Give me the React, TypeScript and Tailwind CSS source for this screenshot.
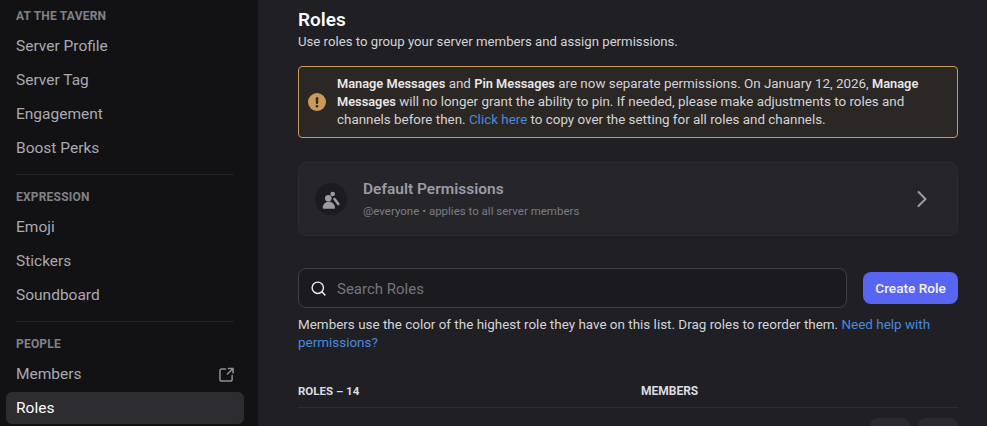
import React from 'react';
import { ChevronRight, Search } from 'lucide-react';

const NavHeader: React.FC<{ label: string }> = ({ label }) => (
  <div className="flex h-[26px] shrink-0 items-center pl-[10px] pt-[1px] text-[12px] font-bold tracking-[0.2px] text-[#818189]">{label}</div>
);

const NavItem: React.FC<{ label: string; active?: boolean; external?: boolean }> = ({ label, active, external }) => (
  <div className={`flex h-8 shrink-0 items-center justify-between rounded-md px-[10px] text-[15.5px] ${active ? 'bg-[#2c2c31] text-[#fbfbfb]' : 'text-[#a9a9b0]'}`}>
    <span className="pt-[1px]">{label}</span>
    {external && (
      <svg width="15" height="15" viewBox="0 0 16 16" fill="none" stroke="#8e8e95" strokeWidth="1.600" strokeLinecap="round" strokeLinejoin="round">
        <path d="M7 2H3a2 2 0 0 0-2 2v9a2 2 0 0 0 2 2h9a2 2 0 0 0 2-2V9" />
        <path d="M10 1.500h5V6.500M15 1.500 9 7.500" />
      </svg>
    )}
  </div>
);

const Divider = () => <div className="mx-[10px] mt-[8px] mb-[6px] h-px shrink-0 bg-[#222226]" />;

const Strong: React.FC<{ children: React.ReactNode }> = ({ children }) => (
  <b className="text-[12.8px] font-semibold text-[#e8e8ea]">{children}</b>
);

export default function App() {
  return (
    <div className="flex h-[426px] w-[987px] overflow-hidden bg-[#1f1f24] font-['Roboto',sans-serif]">
      {/* Sidebar */}
      <aside className="flex w-[258px] shrink-0 flex-col gap-[2px] bg-[#121214] pl-[6px] pr-[14px] pt-[2px]">
        <NavHeader label="AT THE TAVERN" />
        <NavItem label="Server Profile" />
        <NavItem label="Server Tag" />
        <NavItem label="Engagement" />
        <NavItem label="Boost Perks" />
        <Divider />
        <NavHeader label="EXPRESSION" />
        <NavItem label="Emoji" />
        <NavItem label="Stickers" />
        <NavItem label="Soundboard" />
        <Divider />
        <NavHeader label="PEOPLE" />
        <NavItem label="Members" external />
        <NavItem label="Roles" active />
      </aside>

      {/* Main */}
      <main className="ml-10 flex w-[660px] shrink-0 flex-col">
        <h1 className="mt-[8px] shrink-0 text-[19px] leading-[24px] font-semibold text-[#fbfbfb]">Roles</h1>
        <p className="mt-[1px] shrink-0 text-[13.2px] leading-[18px] text-[#d4d4d8]">Use roles to group your server members and assign permissions.</p>

        <div className="mt-[15px] flex h-[72px] shrink-0 items-center gap-[11px] rounded-[4px] border border-[#c99a55] bg-[#2b2724] pl-[9px] pr-[24px]">
          <svg width="18" height="18" viewBox="0 0 18 18" className="shrink-0">
            <circle cx="9" cy="9" r="9" fill="#cb9a58" />
            <rect x="7.800" y="4" width="2.400" height="7" rx="1.200" fill="#2b2724" />
            <circle cx="9" cy="13.200" r="1.300" fill="#2b2724" />
          </svg>
          <p className="text-[13.4px] leading-[18px] text-[#d4d4d8]">
            <Strong>Manage Messages</Strong> and <Strong>Pin Messages</Strong> are now separate permissions. On January 12, 2026, <Strong>Manage Messages</Strong> will no longer grant the ability to pin. If needed, please make adjustments to roles and channels before then. <span className="text-[#4a8ade]">Click here</span> to copy over the setting for all roles and channels.
          </p>
        </div>

        <div className="mt-[24px] flex h-[74px] shrink-0 items-center rounded-lg border border-[#2c2c31] bg-[#25252a] pl-[16px] pr-[21px]">
          <div className="flex h-8 w-8 items-center justify-center rounded-full bg-[#1c1c20]">
            <svg width="20" height="20" viewBox="0 0 20 20" fill="#9b9ba3">
              <circle cx="7.300" cy="9.300" r="3.300" />
              <path d="M1.700 19c0-3.800 2.500-6.300 6.100-6.300 3.500 0 6.200 2.500 6.200 6.300 0 .5-.3.800-.8.800H2.500c-.5 0-.8-.3-.8-.8Z" />
              <circle cx="11.700" cy="5" r="2.300" />
              <path d="M13.500 10 17.300 15" fill="none" stroke="#9b9ba3" strokeWidth="2.600" strokeLinecap="round" />
            </svg>
          </div>
          <div className="ml-[16px] flex-1">
            <div className="text-[15.5px] leading-[20px] font-semibold text-[#9b9ba3]">Default Permissions</div>
            <div className="mt-[4px] text-[11.5px] leading-[16px] text-[#7c7c84]">@everyone • applies to all server members</div>
          </div>
          <ChevronRight size={28} strokeWidth={1.8} className="text-[#9b9ba3]" />
        </div>

        <div className="mt-[32px] flex shrink-0 items-center gap-4">
          <div className="flex h-[40px] flex-1 items-center gap-[10px] rounded-lg border border-[#404046] bg-[#1b1b1f] pl-[11px]">
            <Search size={17} className="text-[#f0f0f2]" />
            <span className="pt-[2px] text-[15px] text-[#74747c]">Search Roles</span>
          </div>
          <button className="h-8 w-[95px] rounded-lg bg-[#5865f2] text-[13.6px] font-medium text-[#f4f5ff]">Create Role</button>
        </div>

        <p className="mt-[8px] shrink-0 text-[13.45px] leading-[18px] text-[#d4d4d8]">
          Members use the color of the highest role they have on this list. Drag roles to reorder them. <span className="text-[#4a8ade]">Need help with permissions?</span>
        </p>

        <div className="mt-[31px] flex h-[25px] shrink-0 items-start border-b border-[#2c2c31] text-[12px] leading-[16px] font-bold text-[#dcdce0]">
          <span className="w-[343px] text-[11.5px]">ROLES – 14</span>
          <span>MEMBERS</span>
        </div>

        <div className="mt-[10px] flex shrink-0 justify-end gap-2">
          <div className="h-10 w-10 rounded-lg bg-[#2a2a2f]" />
          <div className="h-10 w-10 rounded-lg bg-[#2a2a2f]" />
        </div>
      </main>
    </div>
  );
}
